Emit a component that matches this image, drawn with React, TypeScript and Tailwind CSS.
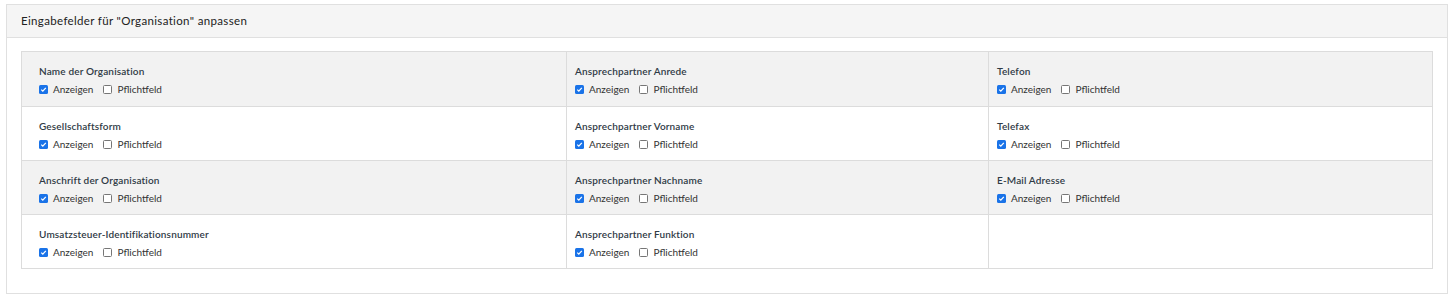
import React from 'react';

interface Feld {
  label: string;
}

const spalten: Feld[][] = [
  [
    { label: 'Name der Organisation' },
    { label: 'Ansprechpartner Anrede' },
    { label: 'Telefon' },
  ],
  [
    { label: 'Gesellschaftsform' },
    { label: 'Ansprechpartner Vorname' },
    { label: 'Telefax' },
  ],
  [
    { label: 'Anschrift der Organisation' },
    { label: 'Ansprechpartner Nachname' },
    { label: 'E-Mail Adresse' },
  ],
  [
    { label: 'Umsatzsteuer-Identifikationsnummer' },
    { label: 'Ansprechpartner Funktion' },
  ],
];

const Checkbox: React.FC<{ checked: boolean; label: string }> = ({ checked, label }) => (
  <label className="flex items-center gap-[5px]">
    {checked ? (
      <span className="flex h-[9px] w-[9px] items-center justify-center rounded-[1.5px] bg-[#1a73e8]">
        <svg width="7" height="7" viewBox="0 0 10 10">
          <path d="M1.8 5.2 L4 7.3 L8.3 2.6" fill="none" stroke="white" strokeWidth="1.8" />
        </svg>
      </span>
    ) : (
      <span className="h-[9px] w-[9px] rounded-[1.5px] border border-[#767676] bg-white" />
    )}
    <span>{label}</span>
  </label>
);

const Zelle: React.FC<{ feld?: Feld; first?: boolean }> = ({ feld, first }) => (
  <div className={`${first ? 'pl-[17px]' : 'pl-[8px] border-l border-[#dcdcdc]'} pt-[12px]`}>
    {feld && (
      <>
        <div className="text-[10px] font-semibold tracking-[0.15px] text-[#2f3a45]">{feld.label}</div>
        <div className="mt-[3px] flex items-center gap-[10px] text-[10px] text-[#333]">
          <Checkbox checked label="Anzeigen" />
          <Checkbox checked={false} label="Pflichtfeld" />
        </div>
      </>
    )}
  </div>
);

const App: React.FC = () => {
  return (
    <div className="min-h-[301px] bg-white pl-[6px] pr-[6px] pt-[4px] font-['Lato',sans-serif]">
      <div className="h-[290px] border border-[#e0e0e0]">
        <div className="flex h-[33px] items-center border-b border-[#e0e0e0] bg-[#f5f5f5] pl-[14px] text-[11.5px] tracking-[0.35px] text-[#222]">
          Eingabefelder für "Organisation" anpassen
        </div>
        <div className="px-[14px] pt-[13px]">
          <div className="border border-[#dcdcdc]">
            {spalten.map((zeile, i) => (
              <div
                key={i}
                className={`grid h-[54px] grid-cols-[544px_422px_1fr] ${i % 2 === 0 ? 'bg-[#f2f2f2]' : 'bg-white'} ${i > 0 ? 'border-t border-[#dcdcdc]' : ''}`}
              >
                <Zelle feld={zeile[0]} first />
                <Zelle feld={zeile[1]} />
                <Zelle feld={zeile[2]} />
              </div>
            ))}
          </div>
        </div>
      </div>
    </div>
  );
};

export default App;
